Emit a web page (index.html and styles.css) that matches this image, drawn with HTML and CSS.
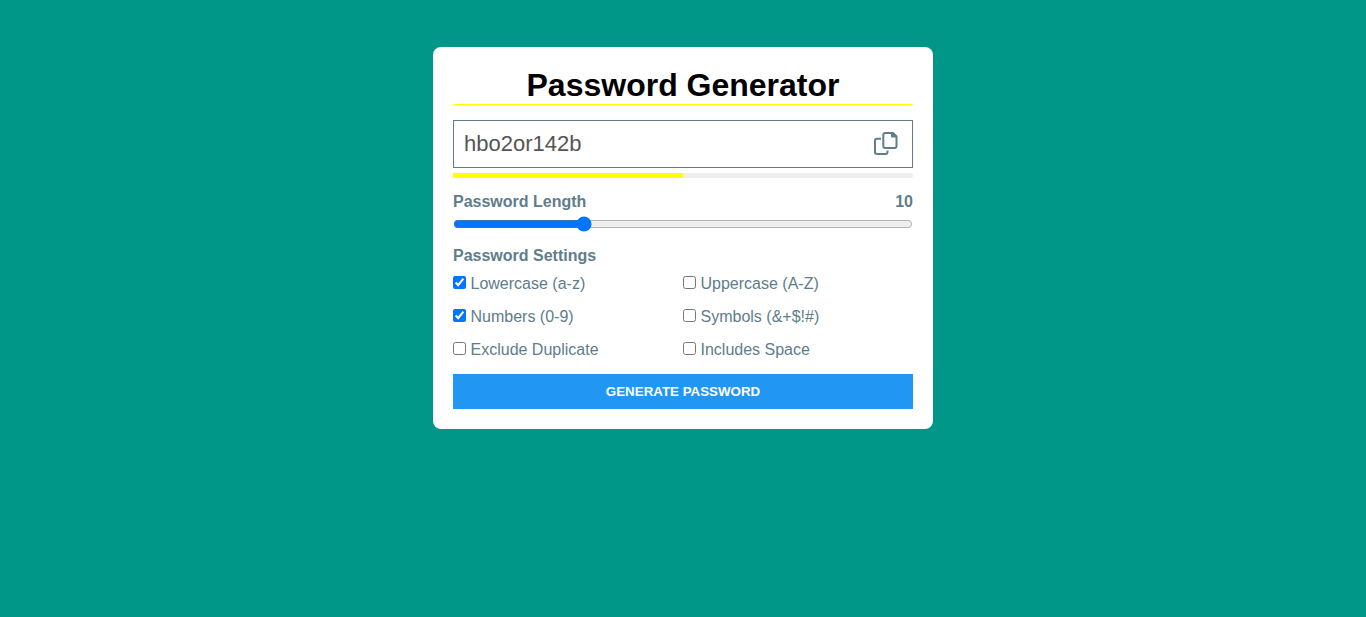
FILE: index.html
```html
<!DOCTYPE html>
<html lang="en">
<head>
<meta charset="utf-8">
<title>Password Generator</title>
<link rel="stylesheet" href="styles.css">
</head>
<body>
<main class="container">
  <h1 class="title">Password Generator</h1>
  <div class="input-box">
    <input class="password" type="text" value="hbo2or142b" readonly>
    <svg class="copy" viewBox="0 0 24 24" fill="none" stroke="currentColor" stroke-width="2" stroke-linejoin="round">
      <path d="M11.300 1h7.700l3.500 3.500V14a2 2 0 0 1-2 2h-9.200a2 2 0 0 1-2-2V3a2 2 0 0 1 2-2z"/>
      <path d="M17 1v3.500a1 1 0 0 0 1 1h4.500v-2L20 1z" fill="currentColor" stroke="none"/>
      <path d="M7 6.700H3a2 2 0 0 0-2 2V20a2 2 0 0 0 2 2h8.500a2 2 0 0 0 2-2v-1.500"/>
    </svg>
  </div>
  <div class="indicator"><div class="indicator-level"></div></div>
  <div class="length-row"><label for="length">Password Length</label><span>10</span></div>
  <input class="slider" id="length" type="range" min="0" max="36" value="10">
  <h2 class="settings-title">Password Settings</h2>
  <div class="options">
    <label class="option"><input type="checkbox" checked><span>Lowercase (a-z)</span></label>
    <label class="option"><input type="checkbox"><span>Uppercase (A-Z)</span></label>
    <label class="option"><input type="checkbox" checked><span>Numbers (0-9)</span></label>
    <label class="option"><input type="checkbox"><span>Symbols (&amp;+$!#)</span></label>
    <label class="option"><input type="checkbox"><span>Exclude Duplicate</span></label>
    <label class="option"><input type="checkbox"><span>Includes Space</span></label>
  </div>
  <button class="generate" type="button">GENERATE PASSWORD</button>
</main>
</body>
</html>
```
FILE: styles.css
```css
* { box-sizing: border-box; margin: 0; padding: 0; }
body {
  background: #009688;
  font-family: "Liberation Sans", Arial, sans-serif;
  color: #607d8b;
}
.container {
  width: 500px;
  height: 382px;
  margin: 47px auto 0;
  padding: 20px;
  background: #fff;
  border-radius: 8px;
}
.title {
  height: 38px;
  border-bottom: 1px solid yellow;
  color: #000;
  font-size: 32px;
  line-height: 37px;
  text-align: center;
}
.input-box {
  display: flex;
  align-items: flex-start;
  height: 48px;
  margin-top: 15px;
  padding: 10px 14px 0 10px;
  border: 1px solid #607d8b;
}
.password {
  flex: 1;
  min-width: 0;
  height: 26px;
  border: 0;
  outline: 0;
  color: #555;
  font: 22px "Liberation Sans", Arial, sans-serif;
}
.copy { width: 24px; height: 24px; margin-top: 1px; }
.indicator {
  height: 5px;
  margin-top: 5px;
  border-radius: 0 3px 3px 0;
  background: #eee;
}
.indicator-level { width: 50%; height: 100%; background: yellow; }
.length-row {
  display: flex;
  justify-content: space-between;
  margin-top: 15px;
  font-size: 16px;
  font-weight: bold;
  line-height: 18px;
}
.slider { display: block; width: 100%; height: 16px; margin-top: 5px; }
.settings-title { margin-top: 15px; font-size: 16px; line-height: 18px; }
.options {
  display: grid;
  grid-template-columns: 1fr 1fr;
  row-gap: 15px;
  margin-top: 10px;
}
.option { display: flex; align-items: center; gap: 4.5px; height: 18px; font-size: 16px; }
.option input { width: 13px; height: 13px; margin-bottom: 4px; }
.generate {
  display: block;
  width: 100%;
  height: 35px;
  margin-top: 15px;
  border: 0;
  background: #2196f3;
  color: #fff;
  font: bold 13.333px "Liberation Sans", Arial, sans-serif;
}
```
